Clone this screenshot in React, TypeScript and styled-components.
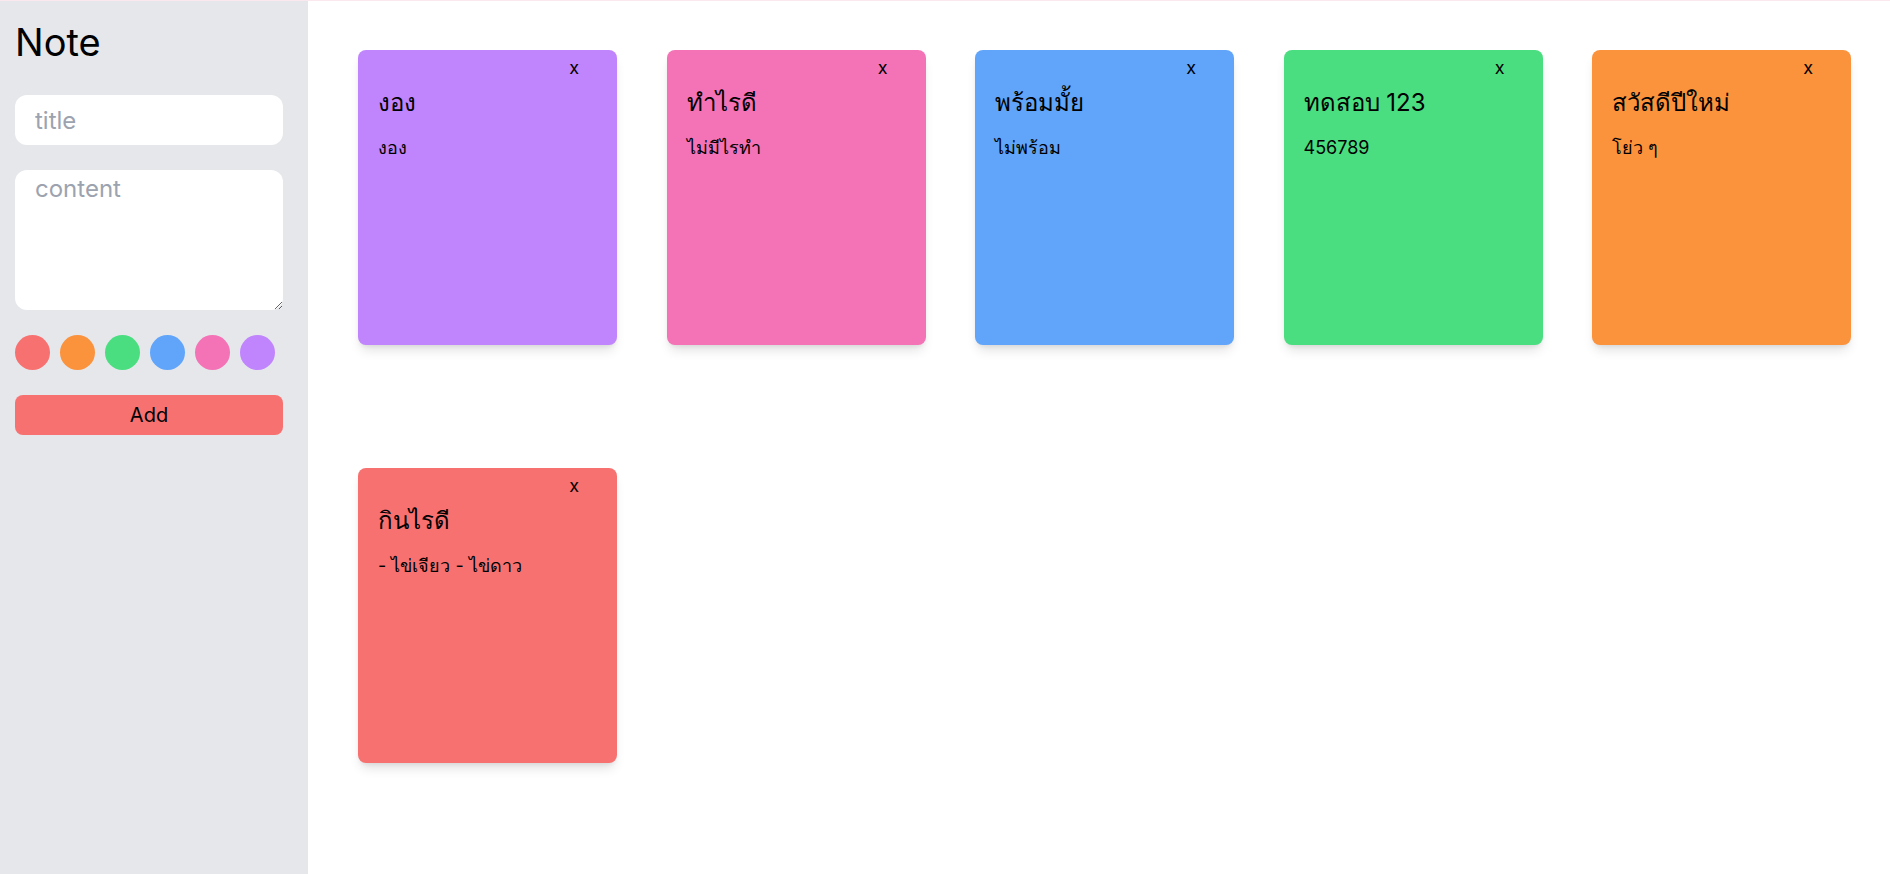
import React from "react";
import styled, { createGlobalStyle } from "styled-components";

const GlobalStyle = createGlobalStyle`
  * {
    box-sizing: border-box;
  }

  body {
    margin: 0;
    font-family: "Inter", "Noto Sans", sans-serif;
    color: #000;
    background: #fff;
  }
`;

const Layout = styled.div`
  display: flex;
  min-height: 100vh;
  border-top: 1px solid #fbe8ee;
`;

const Sidebar = styled.aside`
  width: 308px;
  flex-shrink: 0;
  background-color: #e5e7eb;
  padding: 14px 25px 15px 15px;
  display: flex;
  flex-direction: column;
  gap: 25px;
`;

const Heading = styled.h1`
  margin: 0;
  font-size: 38px;
  font-weight: 400;
  line-height: 55px;
`;

const TitleInput = styled.input`
  width: 100%;
  height: 50px;
  border: none;
  border-radius: 12px;
  padding: 0 20px;
  font-family: inherit;
  font-size: 24px;
  background: #fff;
  outline: none;

  &::placeholder {
    color: #9ca3af;
  }
`;

const ContentInput = styled.textarea`
  width: 100%;
  height: 140px;
  border: none;
  border-radius: 12px;
  padding: 1px 20px;
  font-family: inherit;
  font-size: 24px;
  line-height: 1.5;
  background: #fff;
  outline: none;
  resize: vertical;

  &::placeholder {
    color: #9ca3af;
  }
`;

const Swatches = styled.div`
  display: flex;
  gap: 10px;
`;

const Swatch = styled.button<{ $color: string }>`
  width: 35px;
  height: 35px;
  border-radius: 50%;
  border: none;
  padding: 0;
  background-color: ${(p) => p.$color};
  cursor: pointer;
`;

const AddButton = styled.button`
  width: 100%;
  height: 40px;
  border: none;
  border-radius: 8px;
  background-color: #f87171;
  color: #000;
  font-family: inherit;
  font-size: 20px;
  cursor: pointer;
`;

const Board = styled.main`
  flex: 1;
  padding: 49px 30px 50px 50px;
  display: flex;
  flex-wrap: wrap;
  align-content: flex-start;
  column-gap: 49.5px;
  row-gap: 123px;
`;

const Card = styled.div<{ $color: string }>`
  width: 259px;
  height: 295px;
  border-radius: 8px;
  background-color: ${(p) => p.$color};
  box-shadow: 0 8px 12px -3px rgba(0, 0, 0, 0.12), 0 3px 5px -2px rgba(0, 0, 0, 0.08);
  padding: 4px 20px 20px;
  display: flex;
  flex-direction: column;
`;

const CardTop = styled.div`
  display: flex;
  justify-content: flex-end;
  padding-right: 18px;
`;

const CloseButton = styled.button`
  border: none;
  background: none;
  padding: 0;
  font-family: inherit;
  font-size: 18px;
  line-height: 27px;
  color: #000;
  cursor: pointer;
`;

const CardTitle = styled.h2`
  margin: 4px 0 0;
  font-size: 24px;
  font-weight: 400;
  line-height: 36px;
`;

const CardText = styled.p`
  margin: 13px 0 0;
  font-size: 18px;
  line-height: 27px;
`;

const colors = ["#f87171", "#fb923c", "#4ade80", "#60a5fa", "#f472b6", "#c084fc"];

const notes = [
  { title: "งอง", content: "งอง", color: "#c084fc" },
  { title: "ทำไรดี", content: "ไม่มีไรทำ", color: "#f472b6" },
  { title: "พร้อมมั้ย", content: "ไม่พร้อม", color: "#60a5fa" },
  { title: "ทดสอบ 123", content: "456789", color: "#4ade80" },
  { title: "สวัสดีปีใหม่", content: "โย่ว ๆ", color: "#fb923c" },
  { title: "กินไรดี", content: "- ไข่เจียว - ไข่ดาว", color: "#f87171" },
];

const App: React.FC = () => {
  return (
    <>
      <GlobalStyle />
      <Layout>
        <Sidebar>
          <Heading>Note</Heading>
          <TitleInput placeholder="title" />
          <ContentInput placeholder="content" />
          <Swatches>
            {colors.map((c) => (
              <Swatch key={c} $color={c} />
            ))}
          </Swatches>
          <AddButton>Add</AddButton>
        </Sidebar>
        <Board>
          {notes.map((n, i) => (
            <Card key={i} $color={n.color}>
              <CardTop>
                <CloseButton>x</CloseButton>
              </CardTop>
              <CardTitle>{n.title}</CardTitle>
              <CardText>{n.content}</CardText>
            </Card>
          ))}
        </Board>
      </Layout>
    </>
  );
};

export default App;
